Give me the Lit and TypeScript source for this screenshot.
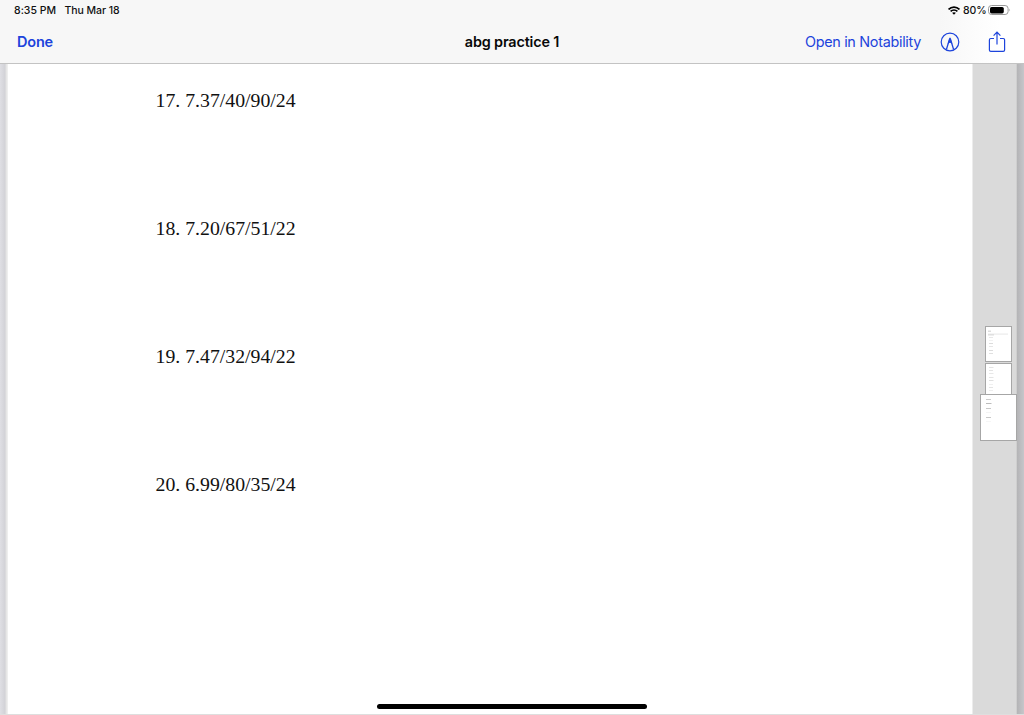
import {LitElement, html, css, svg} from 'lit';
import {customElement, property} from 'lit/decorators.js';

// x, y, width, height, grey level of each line of text on a thumbnail
type Mark = [number, number, number, number, string];

const QUESTIONS = [
  '17. 7.37/40/90/24',
  '18. 7.20/67/51/22',
  '19. 7.47/32/94/22',
  '20. 6.99/80/35/24',
];

const PAGES: Mark[][] = [
  [
    [2, 3.5, 3, 1.5, '#dedede'],
    [2, 6.5, 20, 1.2, '#ececec'],
    [2, 7.4, 6, 1, '#d4d4d4'],
    [3, 10, 4, 1, '#e8e8e8'],
    [3, 13, 4, 1, '#f2f2f2'],
    [3, 16, 4, 1, '#dcdcdc'],
    [3, 19, 4, 1, '#e6e6e6'],
    [3, 23, 4, 1, '#dcdcdc'],
    [3, 26, 4, 1, '#e0e0e0'],
  ],
  [
    [3, 3, 4.5, 1, '#e4e4e4'],
    [3, 6, 4, 1, '#e4e4e4'],
    [3, 9, 4.5, 1, '#e8e8e8'],
    [3, 13, 4.5, 1, '#e4e4e4'],
    [3, 16, 4.5, 1, '#e0e0e0'],
    [3, 20, 4, 1, '#f0f0f0'],
    [3, 23, 4, 1, '#e4e4e4'],
    [3, 26, 4, 1, '#eeeeee'],
  ],
  [
    [5, 4, 5, 1, '#cccccc'],
    [5, 8, 5.5, 1, '#bcbcbc'],
    [5, 13, 5, 1, '#c8c8c8'],
    [5, 17, 5, 1, '#f4f4f4'],
    [5, 22, 5, 1, '#c8c8c8'],
    [5, 26, 5, 1, '#f6f6f6'],
  ],
];

@customElement('status-bar')
export class StatusBar extends LitElement {
  override render() {
    return html`
      <span class="time">8:35 PM</span>
      <span class="date">Thu Mar 18</span>
      <svg class="wifi" width="12" height="9" viewBox="0 0 12 9" fill="none" stroke="#000">
        <path d="M0.6 3.5C3.6 0.3 8.4 0.3 11.4 3.5" stroke-width="1.8" />
        <path d="M2.6 5.4C4.5 3.5 7.5 3.5 9.4 5.4" stroke-width="1.6" />
        <path d="M4.1 6.8C5.2 5.9 6.8 5.9 7.9 6.8L6 8.8Z" fill="#000" stroke="none" />
      </svg>
      <span class="level">80%</span>
      <svg class="battery" width="23" height="10" viewBox="0 0 23 10">
        <rect x="0.5" y="0.5" width="19.6" height="9" rx="3" fill="none" stroke="#999" />
        <rect x="2" y="2" width="13.8" height="6.4" rx="1.6" fill="#000" />
        <path d="M21.4 3.4Q22.8 5 21.4 6.6Z" fill="#999" />
      </svg>
    `;
  }

  static override styles = css`
    :host {
      display: flex;
      align-items: center;
      height: 20px;
      padding: 0 13px 0 14px;
      font-size: 10.5px;
      font-weight: 500;
      line-height: 21px;
      color: #111;
      white-space: nowrap;
    }

    .time {
      width: 50.6px;
      letter-spacing: 0.02px;
    }

    .date {
      flex: 1;
      letter-spacing: -0.08px;
    }

    .wifi {
      margin-right: 3px;
    }

    .level {
      width: 25px;
      letter-spacing: -0.1px;
    }
  `;
}

@customElement('nav-bar')
export class NavBar extends LitElement {
  override render() {
    return html`
      <div class="side">
        <span class="done">Done</span>
      </div>
      <div class="title">abg practice 1</div>
      <div class="side right">
        <span class="open">Open in Notability</span>
        <svg class="markup" width="20" height="20" viewBox="0 0 20 20" fill="none" stroke="#1d44dc">
          <circle cx="10" cy="10" r="8.8" stroke-width="1.2" />
          <path d="M6.4 17.5L9.6 6.8H10.4L13.6 17.5" stroke-width="1.3" />
          <path d="M10 4.9L7.6 11.8L10 10.8L12.4 11.8Z" fill="#1d44dc" stroke="none" />
        </svg>
        <svg class="share" width="18" height="22" viewBox="0 0 18 22" fill="none" stroke="#1d44dc" stroke-width="1.2">
          <path d="M6 7.5H2.8Q1.4 7.5 1.4 8.9V19Q1.4 20.4 2.8 20.4H15.2Q16.6 20.4 16.6 19V8.9Q16.6 7.5 15.2 7.5H12" />
          <path d="M9 13.5V1.3M5.6 4.7L9 1.2L12.4 4.7" />
        </svg>
      </div>
    `;
  }

  static override styles = css`
    :host {
      display: grid;
      grid-template-columns: 1fr auto 1fr;
      align-items: center;
      height: 43px;
      padding: 0 18px 0 17px;
      font-size: 14.5px;
      line-height: 20px;
      color: #1d44dc;
      white-space: nowrap;
    }

    .side {
      display: flex;
      align-items: center;
    }

    .right {
      justify-content: flex-end;
    }

    .done {
      font-weight: 600;
      letter-spacing: -0.2px;
    }

    .title {
      padding-left: 1px;
      font-weight: 600;
      font-size: 14.4px;
      letter-spacing: -0.15px;
      color: #080808;
    }

    .open {
      font-size: 14.4px;
      letter-spacing: -0.3px;
    }

    .markup {
      margin: 0 28px 0 19px;
    }
  `;
}

@customElement('page-thumb')
export class PageThumb extends LitElement {
  @property({attribute: false}) marks: Mark[] = [];

  override render() {
    return html`
      <svg width="100%" height="100%">
        ${this.marks.map(
          ([x, y, w, h, fill]) =>
            svg`<rect x=${x} y=${y} width=${w} height=${h} fill=${fill} />`
        )}
      </svg>
    `;
  }

  static override styles = css`
    :host {
      display: block;
      box-sizing: border-box;
      overflow: hidden;
      background: #fff;
      border: 1px solid #a6a6a6;
    }

    svg {
      display: block;
    }
  `;
}

@customElement('app-root')
export class AppRoot extends LitElement {
  override render() {
    return html`
      <header>
        <status-bar></status-bar>
        <nav-bar></nav-bar>
      </header>
      <main>
        <div class="left"></div>
        <article>
          ${QUESTIONS.map((q) => html`<p>${q}</p>`)}
        </article>
        <aside>
          <page-thumb class="thumb" .marks=${PAGES[0]}></page-thumb>
          <page-thumb class="thumb cut" .marks=${PAGES[1]}></page-thumb>
          <page-thumb class="thumb current" .marks=${PAGES[2]}></page-thumb>
        </aside>
        <div class="end"></div>
      </main>
      <div class="home"></div>
    `;
  }

  static override styles = css`
    :host {
      position: relative;
      display: flex;
      flex-direction: column;
      width: 1024px;
      height: 715px;
      overflow: hidden;
      font-family: Inter, 'Liberation Sans', sans-serif;
      background: #fff;
    }

    header {
      height: 63px;
      border-bottom: 1px solid #c3c3c3;
      background: linear-gradient(90deg, #f7f7f7 940px, #fff 1000px);
    }

    main {
      flex: 1;
      display: flex;
      box-sizing: border-box;
      border-bottom: 1px solid #dedede;
    }

    .left {
      width: 8px;
      background: linear-gradient(90deg, #dfdfe4 0, #d2d2d7 5px, #e2e2e2 6px, #f2f2f2 8px);
    }

    .end {
      width: 7px;
      background: linear-gradient(90deg, #b4b4b6 0, #c6c6ca 7px);
    }

    article {
      flex: 1;
      padding: 23px 0 0 147.5px;
      font-family: 'Liberation Serif', serif;
      font-size: 19.8px;
      line-height: 26px;
      color: #111;
    }

    p {
      margin: 0 0 102px;
    }

    aside {
      display: flex;
      flex-direction: column;
      align-items: center;
      box-sizing: border-box;
      width: 45px;
      padding: 262px 0 0 8px;
      border-left: 1px solid #ececec;
      border-right: 1px solid #cfcfcf;
      background: #dadada;
    }

    .thumb {
      flex: none;
      width: 27px;
      height: 36px;
      margin-bottom: 1px;
    }

    .cut {
      height: 31px;
      margin-bottom: 0;
      border-bottom: none;
    }

    .current {
      width: 37px;
      height: 47px;
    }

    .home {
      position: absolute;
      left: 377px;
      top: 704px;
      width: 270px;
      height: 5px;
      border-radius: 3px;
      background: #000;
    }
  `;
}

declare global {
  interface HTMLElementTagNameMap {
    'app-root': AppRoot;
    'nav-bar': NavBar;
    'page-thumb': PageThumb;
    'status-bar': StatusBar;
  }
}
